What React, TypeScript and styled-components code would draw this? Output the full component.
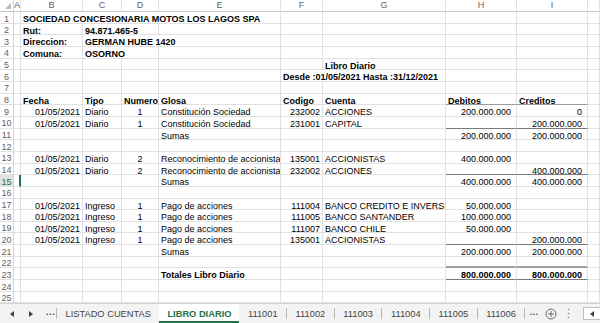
import React from 'react';
import styled, { createGlobalStyle, css } from 'styled-components';

const GlobalStyle = createGlobalStyle`
  html, body { margin: 0; padding: 0; background: #ffffff; }
  body {
    width: 600px;
    height: 323px;
    overflow: hidden;
    font-family: "Liberation Sans", Arial, sans-serif;
  }
`;

type Align = 'l' | 'r' | 'c';
type BorderKind = 'light' | 'mid' | 'thick';

interface CellDef {
  t: string;
  a?: Align;
  b?: boolean;
  span?: number;
  num?: boolean;
}

const COLS = ['A', 'B', 'C', 'D', 'E', 'F', 'G', 'H', 'I', 'J'];
const WIDTHS = [7, 62, 39, 37, 122, 42, 123, 71, 71, 12];
const ROW_COUNT = 25;
const ROW_H = 11.667;
const GREEN = '#217346';

const Page = styled.div`
  display: flex;
  flex-direction: column;
  width: 600px;
  height: 323px;
  background: #fff;
`;

const Sheet = styled.div`
  display: grid;
  grid-template-columns: 14px ${WIDTHS.map((w) => `${w}px`).join(' ')};
  grid-template-rows: 12px repeat(${ROW_COUNT}, ${ROW_H}px);
  flex: none;
`;

const Corner = styled.div`
  position: relative;
  box-sizing: border-box;
  border-right: 1px solid #d4d4d4;
  border-bottom: 1px solid #c6c6c6;
  &::after {
    content: '';
    position: absolute;
    right: 2px;
    bottom: 2px;
    width: 0;
    height: 0;
    border-left: 6px solid transparent;
    border-bottom: 6px solid #b9b9b9;
  }
`;

const ColHead = styled.div`
  box-sizing: border-box;
  border-right: 1px solid #e1e1e1;
  border-bottom: 1px solid #c6c6c6;
  font-family: "Liberation Sans", Arial, sans-serif;
  font-size: 9px;
  line-height: 11px;
  color: #5f5f5f;
  text-align: center;
  overflow: hidden;
  white-space: nowrap;
`;

const RowHead = styled.div<{ $active?: boolean }>`
  box-sizing: border-box;
  border-right: 1px solid #d4d4d4;
  border-bottom: 1px solid #e1e1e1;
  font-size: 9px;
  line-height: 10px;
  padding-top: 1.5px;
  color: #5f5f5f;
  text-align: center;
  ${(p) =>
    p.$active &&
    css`
      background: #e1e1e1;
      color: ${GREEN};
    `}
`;

const bottomBorder = (k?: BorderKind) => {
  if (k === 'light') return '1px solid #9a9a9a';
  if (k === 'mid') return '1px solid #7a7a7a';
  if (k === 'thick') return '2px solid #a0a0a0';
  return '1px solid #e1e1e1';
};

const Cell = styled.div<{
  $align: Align;
  $bold?: boolean;
  $num?: boolean;
  $bb?: BorderKind;
  $span: number;
  $selected?: boolean;
}>`
  box-sizing: border-box;
  grid-column: span ${(p) => p.$span};
  border-right: ${(p) => (p.$selected ? `2px solid ${GREEN}` : '1px solid #e1e1e1')};
  border-bottom: ${(p) => bottomBorder(p.$bb)};
  font-size: 9px;
  line-height: 10px;
  padding-top: 2px;
  padding-left: ${(p) => (p.$align === 'l' ? '2px' : '0')};
  padding-right: ${(p) => (p.$align === 'r' ? (p.$num ? '5px' : '2px') : '0')};
  text-align: ${(p) => (p.$align === 'l' ? 'left' : p.$align === 'r' ? 'right' : 'center')};
  font-weight: ${(p) => (p.$bold ? 700 : 400)};
  color: #000;
  white-space: nowrap;
  overflow-x: clip;
  overflow-y: visible;
`;

const TabBar = styled.div`
  flex: 1;
  display: flex;
  align-items: stretch;
  box-sizing: border-box;
  border-top: 1px solid #d4d4d4;
  background: #f3f3f3;
  font-family: "Liberation Sans", Arial, sans-serif;
  font-size: 9.3px;
  color: #444;
`;

const Nav = styled.div`
  width: 56px;
  display: flex;
  align-items: center;
  box-sizing: border-box;
  padding-left: 10px;
`;

const NavBtn = styled.span`
  width: 18px;
  display: flex;
  align-items: center;
  color: #404040;
`;

const Dots = styled.span<{ $green?: boolean }>`
  font-weight: 700;
  letter-spacing: 0.5px;
  color: ${(p) => (p.$green ? GREEN : '#404040')};
  line-height: 1;
  padding-bottom: 2px;
`;

const Sep = styled.div`
  width: 1px;
  align-self: center;
  height: 11px;
  background: #b8b8b8;
`;

const Tab = styled.div<{ $active?: boolean }>`
  display: flex;
  align-items: center;
  padding: 0 8.5px;
  white-space: nowrap;
  ${(p) =>
    p.$active &&
    css`
      background: #fff;
      color: ${GREEN};
      font-weight: 700;
      box-shadow: inset 0 -2px 0 ${GREEN};
      padding: 0 8px 0 8px;
    `}
`;

const RightTools = styled.div`
  display: flex;
  align-items: center;
  padding-left: 4px;
  flex: 1;
`;

const ToolIcon = styled.span<{ $w: number }>`
  width: ${(p) => p.$w}px;
  display: flex;
  align-items: center;
  justify-content: center;
`;

const ScrollBox = styled.div`
  margin-left: auto;
  width: 17px;
  height: 13px;
  box-sizing: border-box;
  border: 1px solid #bdbdbd;
  border-right: none;
  background: #fff;
  display: flex;
  align-items: center;
  justify-content: center;
`;

const TriLeft = () => (
  <svg width="5" height="6" viewBox="0 0 5 6">
    <path d="M4 0 L0 3 L4 6 Z" fill="#404040" />
  </svg>
);
const TriRight = () => (
  <svg width="5" height="6" viewBox="0 0 5 6">
    <path d="M1 0 L5 3 L1 6 Z" fill="#404040" />
  </svg>
);
const PlusCircle = () => (
  <svg width="12" height="12" viewBox="0 0 12 12">
    <circle cx="6" cy="6" r="5" fill="none" stroke="#6b6b6b" strokeWidth="1" />
    <path d="M6 3 V9 M3 6 H9" stroke="#6b6b6b" strokeWidth="1" />
  </svg>
);
const Kebab = () => (
  <svg width="3" height="11" viewBox="0 0 3 11">
    <circle cx="1.5" cy="1.5" r="0.8" fill="#8a8a8a" />
    <circle cx="1.5" cy="5.5" r="0.8" fill="#8a8a8a" />
    <circle cx="1.5" cy="9.5" r="0.8" fill="#8a8a8a" />
  </svg>
);

type RowMap = Record<string, CellDef>;

const entry = (
  fecha: string,
  tipo: string,
  num: string,
  glosa: string,
  cod: string,
  cuenta: string,
  deb: string,
  cred: string
): RowMap => ({
  B: { t: fecha, a: 'r' },
  C: { t: tipo },
  D: { t: num, a: 'c' },
  E: { t: glosa },
  F: { t: cod, a: 'r' },
  G: { t: cuenta },
  H: { t: deb, a: 'r', num: true },
  I: { t: cred, a: 'r', num: true },
});

const sumas = (d: string, c: string): RowMap => ({
  E: { t: 'Sumas' },
  H: { t: d, a: 'r', num: true },
  I: { t: c, a: 'r', num: true },
});

const ROWS: Record<number, RowMap> = {
  1: { B: { t: 'SOCIEDAD CONCESIONARIA MOTOS LOS LAGOS SPA', b: true, span: 4 } },
  2: { B: { t: 'Rut:', b: true }, C: { t: '94.871.465-5', b: true, span: 2 } },
  3: { B: { t: 'Direccion:', b: true }, C: { t: 'GERMAN HUBE 1420', b: true, span: 3 } },
  4: { B: { t: 'Comuna:', b: true }, C: { t: 'OSORNO', b: true, span: 2 } },
  5: { G: { t: 'Libro Diario', b: true } },
  6: { F: { t: 'Desde :01/05/2021 Hasta :31/12/2021', b: true, span: 2 } },
  8: {
    B: { t: 'Fecha', b: true },
    C: { t: 'Tipo', b: true },
    D: { t: 'Numero', b: true },
    E: { t: 'Glosa', b: true },
    F: { t: 'Codigo', b: true },
    G: { t: 'Cuenta', b: true },
    H: { t: 'Debitos', b: true },
    I: { t: 'Creditos', b: true },
  },
  9: entry('01/05/2021', 'Diario', '1', 'Constitución Sociedad', '232002', 'ACCIONES', '200.000.000', '0'),
  10: entry('01/05/2021', 'Diario', '1', 'Constitución Sociedad', '231001', 'CAPITAL', '', '200.000.000'),
  11: sumas('200.000.000', '200.000.000'),
  13: entry('01/05/2021', 'Diario', '2', 'Reconocimiento de accionista', '135001', 'ACCIONISTAS', '400.000.000', ''),
  14: entry('01/05/2021', 'Diario', '2', 'Reconocimiento de accionista', '232002', 'ACCIONES', '', '400.000.000'),
  15: sumas('400.000.000', '400.000.000'),
  17: entry('01/05/2021', 'Ingreso', '1', 'Pago de acciones', '111004', 'BANCO CREDITO E INVERSI', '50.000.000', ''),
  18: entry('01/05/2021', 'Ingreso', '1', 'Pago de acciones', '111005', 'BANCO SANTANDER', '100.000.000', ''),
  19: entry('01/05/2021', 'Ingreso', '1', 'Pago de acciones', '111007', 'BANCO CHILE', '50.000.000', ''),
  20: entry('01/05/2021', 'Ingreso', '1', 'Pago de acciones', '135001', 'ACCIONISTAS', '', '200.000.000'),
  21: sumas('200.000.000', '200.000.000'),
  23: {
    E: { t: 'Totales Libro Diario', b: true },
    H: { t: '800.000.000', b: true, a: 'r', num: true },
    I: { t: '800.000.000', b: true, a: 'r', num: true },
  },
};

const TOTAL_BORDERS: Record<number, BorderKind> = {
  8: 'light',
  10: 'mid',
  14: 'mid',
  20: 'mid',
  22: 'thick',
  23: 'mid',
};

const SELECTED_ROW = 15;

const TABS = ['LISTADO CUENTAS', 'LIBRO DIARIO', '111001', '111002', '111003', '111004', '111005', '111006'];
const ACTIVE_TAB = 'LIBRO DIARIO';

function renderRow(r: number) {
  const data = ROWS[r] || {};
  const cells: React.ReactNode[] = [
    <RowHead key={`rh${r}`} $active={r === SELECTED_ROW}>
      {r}
    </RowHead>,
  ];
  let i = 0;
  while (i < COLS.length) {
    const col = COLS[i];
    const def = data[col];
    const span = def?.span ?? 1;
    const bb = col === 'H' || col === 'I' ? TOTAL_BORDERS[r] : undefined;
    cells.push(
      <Cell
        key={`${col}${r}`}
        $align={def?.a ?? 'l'}
        $bold={def?.b}
        $num={def?.num}
        $bb={bb}
        $span={span}
        $selected={r === SELECTED_ROW && col === 'A'}
      >
        {def?.t ?? ''}
      </Cell>
    );
    i += span;
  }
  return cells;
}

export default function App() {
  const rows: number[] = Array.from({ length: ROW_COUNT }, (_, k) => k + 1);
  return (
    <>
      <GlobalStyle />
      <Page>
        <Sheet>
          <Corner />
          {COLS.map((c) => (
            <ColHead key={c}>{c === 'J' ? '' : c}</ColHead>
          ))}
          {rows.map((r) => renderRow(r))}
        </Sheet>
        <TabBar>
          <Nav>
            <NavBtn>
              <TriLeft />
            </NavBtn>
            <NavBtn>
              <TriRight />
            </NavBtn>
            <Dots>...</Dots>
          </Nav>
          <Sep />
          {TABS.map((t, idx) => (
            <React.Fragment key={t}>
              <Tab $active={t === ACTIVE_TAB}>{t}</Tab>
              {idx >= 2 && <Sep />}
            </React.Fragment>
          ))}
          <RightTools>
            <Dots $green>...</Dots>
            <ToolIcon $w={24}>
              <PlusCircle />
            </ToolIcon>
            <ToolIcon $w={12}>
              <Kebab />
            </ToolIcon>
            <ScrollBox>
              <TriLeft />
            </ScrollBox>
          </RightTools>
        </TabBar>
      </Page>
    </>
  );
}
